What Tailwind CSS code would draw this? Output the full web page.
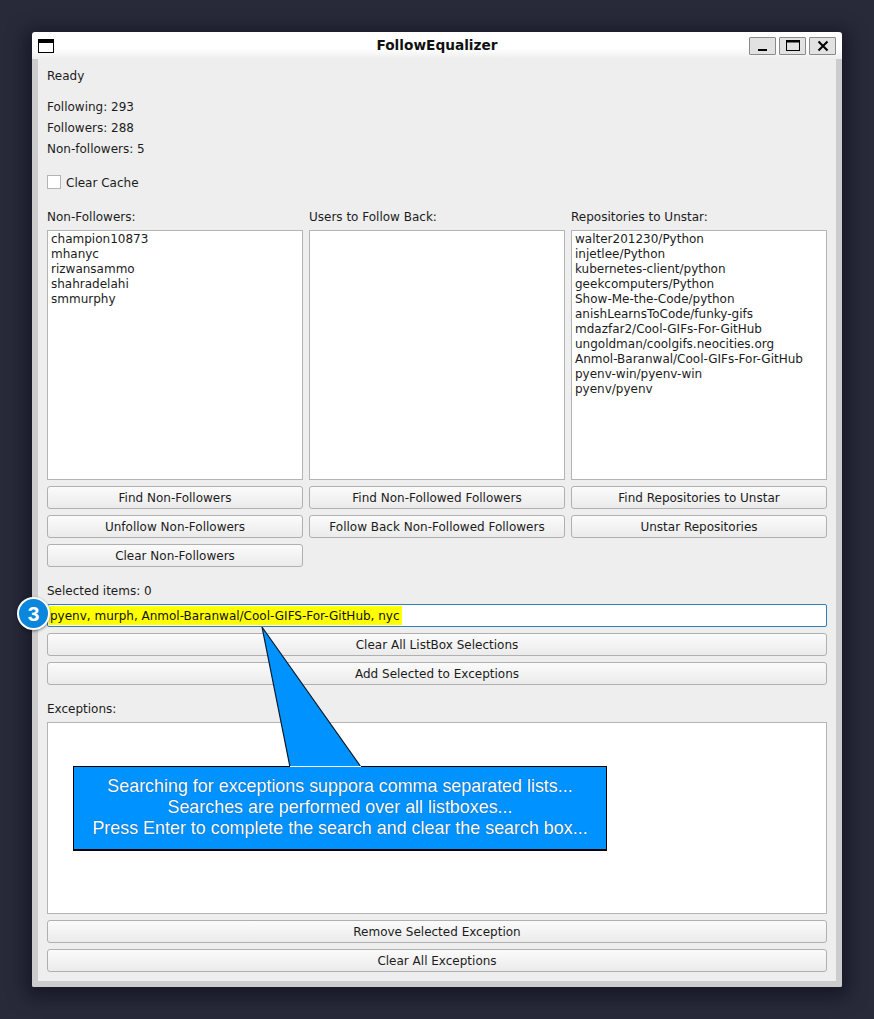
<!DOCTYPE html>
<html><head><meta charset="utf-8"><script src="https://cdn.jsdelivr.net/npm/@tailwindcss/browser@4"></script></head>
<body class="bg-[#282a3a] m-0">
<div class="relative w-[874px] h-[1019px] pt-[32px] pl-[32px] overflow-hidden font-['DejaVu_Sans',sans-serif] text-[12px] text-[#1c1c1c]">
  <div class="relative w-[810px] h-[955px] rounded-[2px] flex flex-col shadow-[0_4px_18px_6px_rgba(10,10,20,0.55)]">
    <div class="h-[27px] shrink-0 relative flex items-start justify-between pl-[6px] pr-[6px] pt-[5px] rounded-t-[3px] bg-gradient-to-b from-white from-60% to-[#eeeeee]">
      <div class="w-[16px] h-[14px] border border-black border-t-[4px] bg-white mt-[2px]"></div>
      <div class="absolute left-0 right-0 top-[4px] text-center font-bold text-[13.7px] leading-[18px] text-[#111]">FollowEqualizer</div>
      <div class="flex gap-[3px]">
        <div class="w-[27px] h-[18px] border border-[#8a8a8a] bg-[#e2e2e2] rounded-[1px] flex items-center justify-center"><svg width="14" height="12" viewBox="0 0 14 12"><rect x="2" y="9" width="9" height="2" fill="#000"/></svg></div>
        <div class="w-[27px] h-[18px] border border-[#8a8a8a] bg-[#e2e2e2] rounded-[1px] flex items-center justify-center"><svg width="14" height="12" viewBox="0 0 14 12"><rect x="0.5" y="0.5" width="13" height="10" fill="none" stroke="#000" stroke-width="1"/><rect x="0.5" y="0.5" width="13" height="2" fill="#000"/></svg></div>
        <div class="w-[27px] h-[18px] border border-[#8a8a8a] bg-[#e2e2e2] rounded-[1px] flex items-center justify-center"><svg width="14" height="12" viewBox="0 0 14 12"><path d="M2.5 1.5L11.5 10.5M11.5 1.5L2.5 10.5" stroke="#000" stroke-width="2" fill="none"/></svg></div>
      </div>
    </div>
    <div class="flex-1 border-x-[6px] border-b-[6px] border-[#cccccc] bg-[#eeeeee] px-[9px] flex flex-col rounded-b-[2px]">
      <div class="h-[15px] leading-[15px] mt-[10px]">Ready</div>
      <div class="h-[15px] leading-[15px] mt-[16px]">Following: 293</div>
      <div class="h-[15px] leading-[15px] mt-[6px]">Followers: 288</div>
      <div class="h-[15px] leading-[15px] mt-[6px]">Non-followers: 5</div>
      <div class="flex items-center gap-[5px] h-[14px] mt-[18px]"><div class="w-[14px] h-[14px] border border-[#b4b4b4] bg-white"></div><span class="leading-[15px] pt-[3px]">Clear Cache</span></div>
      <div class="grid grid-cols-3 gap-x-[6px] mt-[21px]">
        <div class="h-[15px] leading-[15px]">Non-Followers:</div>
        <div class="h-[15px] leading-[15px]">Users to Follow Back:</div>
        <div class="h-[15px] leading-[15px]">Repositories to Unstar:</div>
        <div class="mt-[5px] h-[250px] border border-[#b4b4b4] bg-white px-[3px] pt-[1px] leading-[15px]">
          <div>champion10873</div><div>mhanyc</div><div>rizwansammo</div><div>shahradelahi</div><div>smmurphy</div>
        </div>
        <div class="mt-[5px] h-[250px] border border-[#b4b4b4] bg-white"></div>
        <div class="mt-[5px] h-[250px] border border-[#b4b4b4] bg-white px-[3px] pt-[1px] leading-[15px]">
          <div>walter201230/Python</div><div>injetlee/Python</div><div>kubernetes-client/python</div><div>geekcomputers/Python</div><div>Show-Me-the-Code/python</div><div>anishLearnsToCode/funky-gifs</div><div>mdazfar2/Cool-GIFs-For-GitHub</div><div>ungoldman/coolgifs.neocities.org</div><div>Anmol-Baranwal/Cool-GIFs-For-GitHub</div><div>pyenv-win/pyenv-win</div><div>pyenv/pyenv</div>
        </div>
      </div>
      <div class="grid grid-cols-3 gap-x-[6px] gap-y-[6px] mt-[6px]">
        <button class="h-[23px] border border-[#b0b0b0] rounded-[3px] bg-gradient-to-b from-[#fbfbfb] to-[#ebebeb] leading-[15px] pt-[2px]">Find Non-Followers</button>
        <button class="h-[23px] border border-[#b0b0b0] rounded-[3px] bg-gradient-to-b from-[#fbfbfb] to-[#ebebeb] leading-[15px] pt-[2px]">Find Non-Followed Followers</button>
        <button class="h-[23px] border border-[#b0b0b0] rounded-[3px] bg-gradient-to-b from-[#fbfbfb] to-[#ebebeb] leading-[15px] pt-[2px]">Find Repositories to Unstar</button>
        <button class="h-[23px] border border-[#b0b0b0] rounded-[3px] bg-gradient-to-b from-[#fbfbfb] to-[#ebebeb] leading-[15px] pt-[2px]">Unfollow Non-Followers</button>
        <button class="h-[23px] border border-[#b0b0b0] rounded-[3px] bg-gradient-to-b from-[#fbfbfb] to-[#ebebeb] leading-[15px] pt-[2px]">Follow Back Non-Followed Followers</button>
        <button class="h-[23px] border border-[#b0b0b0] rounded-[3px] bg-gradient-to-b from-[#fbfbfb] to-[#ebebeb] leading-[15px] pt-[2px]">Unstar Repositories</button>
        <button class="h-[23px] border border-[#b0b0b0] rounded-[3px] bg-gradient-to-b from-[#fbfbfb] to-[#ebebeb] leading-[15px] pt-[2px]">Clear Non-Followers</button>
      </div>
      <div class="h-[15px] leading-[15px] mt-[17px]">Selected items: 0</div>
      <div class="mt-[5px] h-[23px] border border-[#2f80b8] rounded-[2px] bg-white pl-[1px] flex items-center"><span class="bg-[#ffff00] h-[19px] leading-[21px] pr-[2px] pl-px text-[#111]">pyenv, murph, Anmol-Baranwal/Cool-GIFS-For-GitHub, nyc</span></div>
      <button class="mt-[6px] h-[23px] shrink-0 border border-[#b0b0b0] rounded-[3px] bg-gradient-to-b from-[#fbfbfb] to-[#ebebeb] leading-[15px] pt-[2px]">Clear All ListBox Selections</button>
      <button class="mt-[6px] h-[23px] shrink-0 border border-[#b0b0b0] rounded-[3px] bg-gradient-to-b from-[#fbfbfb] to-[#ebebeb] leading-[15px] pt-[2px]">Add Selected to Exceptions</button>
      <div class="h-[15px] leading-[15px] mt-[17px]">Exceptions:</div>
      <div class="mt-[5px] h-[192px] shrink-0 border border-[#b4b4b4] bg-white"></div>
      <button class="mt-[6px] h-[23px] shrink-0 border border-[#b0b0b0] rounded-[3px] bg-gradient-to-b from-[#fbfbfb] to-[#ebebeb] leading-[15px] pt-[2px]">Remove Selected Exception</button>
      <button class="mt-[6px] h-[23px] shrink-0 border border-[#b0b0b0] rounded-[3px] bg-gradient-to-b from-[#fbfbfb] to-[#ebebeb] leading-[15px] pt-[2px]">Clear All Exceptions</button>
    </div>
  </div>
  <svg class="absolute left-[255px] top-[622px]" width="115" height="150" viewBox="255 622 115 150"><path d="M262 627L290 767H361Z" fill="#0093ff"/><path d="M290 767L262 627L361 767" fill="none" stroke="#0b1a2a" stroke-width="1.2"/></svg>
  <div class="absolute left-[73px] top-[766px] w-[534px] h-[85px] border border-black [border-bottom-width:2px] bg-[#0093ff] text-center text-white font-['Liberation_Sans',sans-serif] text-[17.9px] leading-[21px] pt-[9px] [text-shadow:0_0_1px_rgba(0,40,90,0.8)]">
    <div>Searching for exceptions suppora comma separated lists...</div>
    <div>Searches are performed over all listboxes...</div>
    <div>Press Enter to complete the search and clear the search box...</div>
  </div>
  <div class="absolute left-[290px] top-[766px] w-[71px] h-px bg-white"></div>
  <div class="absolute left-[17px] top-[597px] w-[33px] h-[33px] rounded-full border-[2px] border-white bg-[#0a86dc] shadow-[0_1px_3px_rgba(0,0,0,0.5)] text-white text-center font-['Liberation_Sans',sans-serif] font-bold text-[21px] leading-[29px]">3</div>
</div>
</body></html>
